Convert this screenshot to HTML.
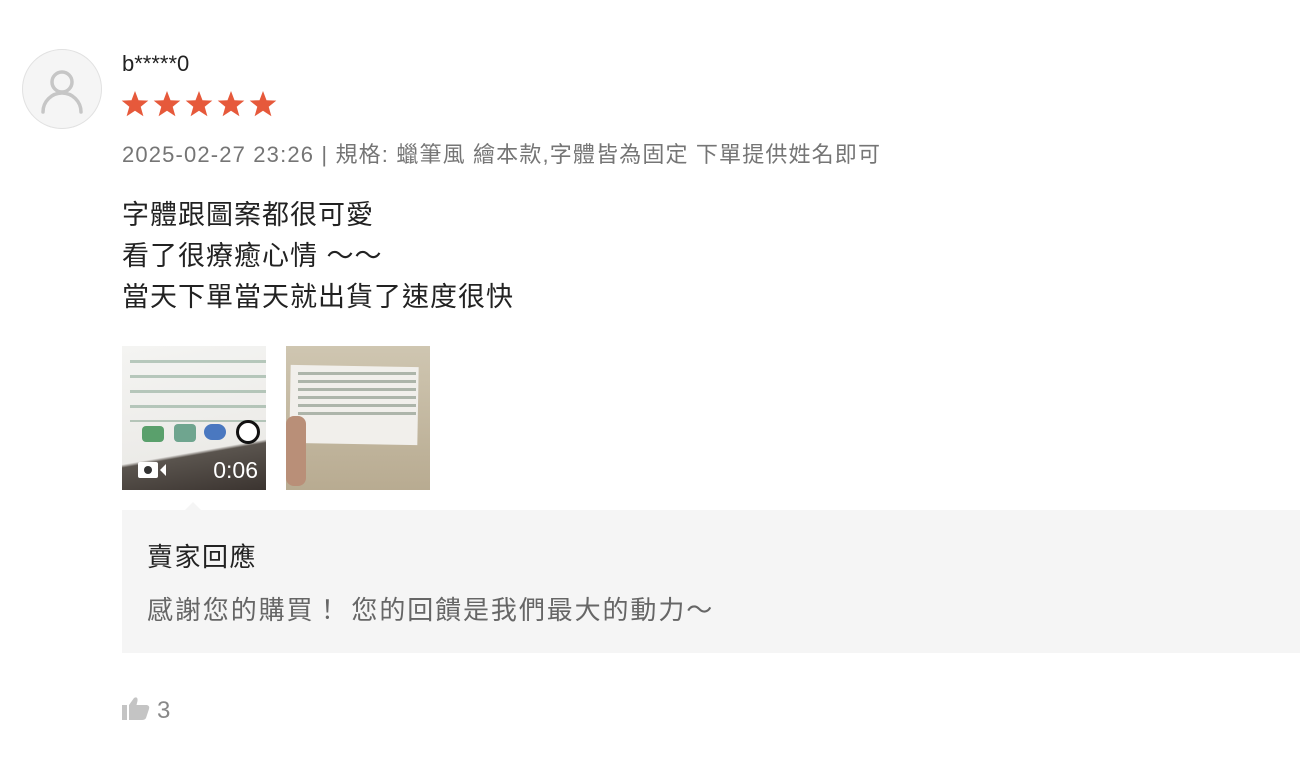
<!DOCTYPE html>
<html><head><meta charset="utf-8"><style>
body{margin:0;width:1300px;height:764px;background:#fff;position:relative;overflow:hidden;font-family:"Liberation Sans","Noto Sans CJK TC",sans-serif;}
.a{position:absolute;white-space:nowrap}
</style></head><body>
<div class="a" style="left:22px;top:49px;width:78px;height:78px;border-radius:50%;background:#f5f5f5;border:1px solid #e1e1e1;">
<svg width="78" height="78" viewBox="0 0 78 78"><circle cx="39" cy="32" r="10" fill="none" stroke="#c6c6c6" stroke-width="3.5"/><path d="M20 62 A19 19 0 0 1 58 62" fill="none" stroke="#c6c6c6" stroke-width="3.5" stroke-linecap="round"/></svg></div>
<div class="a" style="left:122px;top:51px;font-size:22px;color:#222;">b*****0</div>
<svg class="a" style="left:121px;top:90px" width="160" height="30" viewBox="0 0 160 30">
<g fill="#e6593b">
<path id="s" d="M14 1 L17.5 10.2 L27.3 10.6 L19.7 16.7 L22.4 26.2 L14 20.8 L5.6 26.2 L8.3 16.7 L0.7 10.6 L10.5 10.2Z"/>
<use href="#s" x="32"/><use href="#s" x="64"/><use href="#s" x="96"/><use href="#s" x="128"/></g></svg>
<div class="a" style="left:122px;top:137px;font-size:22px;letter-spacing:1.15px;color:#757575;">2025-02-27 23:26 | 規格: 蠟筆風 繪本款,字體皆為固定 下單提供姓名即可</div>
<div class="a" style="left:122px;top:195px;font-size:27px;letter-spacing:1px;line-height:41px;color:#222;">字體跟圖案都很可愛<br>看了很療癒心情 ～～<br>當天下單當天就出貨了速度很快</div>
<div class="a" style="left:122px;top:346px;width:144px;height:144px;background:linear-gradient(170deg,#f4f4f2 0%,#ecebe8 70%,#5a544e 72%,#3b3430 100%);overflow:hidden">
<div style="position:absolute;left:8px;top:6px;width:136px;height:70px;background:repeating-linear-gradient(180deg,transparent 0 8px,rgba(70,120,90,.35) 8px 11px,transparent 11px 15px)"></div>
<div style="position:absolute;left:20px;top:80px;width:22px;height:16px;background:#5aa06c;border-radius:4px"></div>
<div style="position:absolute;left:52px;top:78px;width:22px;height:18px;background:#6fa58f;border-radius:4px"></div>
<div style="position:absolute;left:82px;top:78px;width:22px;height:16px;background:#4a78c0;border-radius:8px"></div>
<div style="position:absolute;left:114px;top:74px;width:18px;height:18px;background:#fff;border:3px solid #111;border-radius:50%"></div>
<svg style="position:absolute;left:16px;top:114px" width="30" height="20"><rect x="0" y="2" width="20" height="16" rx="2" fill="#fff"/><circle cx="10" cy="10" r="4" fill="#333"/><path d="M22 10 L28 4 V16Z" fill="#fff"/></svg>
<div style="position:absolute;right:8px;top:111px;color:#fff;font-size:23px">0:06</div></div>
<div class="a" style="left:286px;top:346px;width:144px;height:144px;background:linear-gradient(180deg,#cfc6b1,#b8ab91);overflow:hidden">
<div style="position:absolute;left:4px;top:20px;width:128px;height:78px;background:#f1efeb;transform:rotate(1deg)"></div>
<div style="position:absolute;left:12px;top:26px;width:118px;height:46px;background:repeating-linear-gradient(180deg,rgba(90,110,90,.45) 0 3px,transparent 3px 8px)"></div>
<div style="position:absolute;left:0;top:70px;width:20px;height:70px;background:#b98f78;border-radius:8px"></div></div>
<div class="a" style="left:122px;top:510px;width:1178px;height:143px;background:#f5f5f5"></div>
<div class="a" style="left:185px;top:502px;width:0;height:0;border-left:8px solid transparent;border-right:8px solid transparent;border-bottom:8px solid #f5f5f5"></div>
<div class="a" style="left:147px;top:537px;font-size:26px;letter-spacing:1.5px;color:#222">賣家回應</div>
<div class="a" style="left:147px;top:590px;font-size:26px;letter-spacing:1.9px;color:#666">感謝您的購買！ 您的回饋是我們最大的動力～</div>
<svg class="a" style="left:122px;top:696px" width="28" height="26" viewBox="0 0 28 26"><rect x="0" y="9" width="5" height="15" fill="#c4c4c4"/><path d="M7 9 L12 2 Q16 0 15.5 5 L14.5 9 H25 Q28 10 27 13 L24 22 Q23 24 20 24 H7Z" fill="#c4c4c4"/></svg>
<div class="a" style="left:157px;top:697px;font-size:24px;color:#888">3</div>
</body></html>
